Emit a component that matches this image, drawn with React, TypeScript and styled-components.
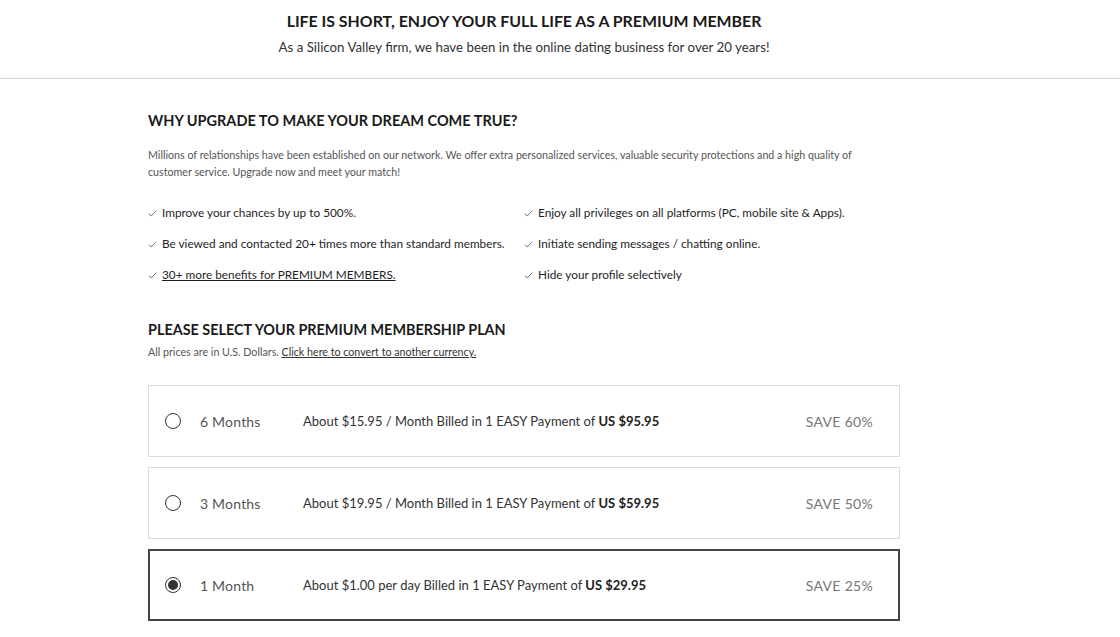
import React from 'react';
import styled, { createGlobalStyle } from 'styled-components';

const GlobalStyle = createGlobalStyle`
    html, body {
        margin: 0;
        padding: 0;
        background: #ffffff;
    }
    body {
        font-family: Lato, "Noto Sans", "Liberation Sans", sans-serif;
        color: #222;
    }
    * { box-sizing: border-box; }
`;

interface plan {
    id: string,
    label: string,
    about: string,
    price: string,
    save: string,
};

const plans: plan[] = [
    { id: '6m', label: '6 Months', about: 'About $15.95 / Month', price: 'US $95.95', save: 'SAVE 60%' },
    { id: '3m', label: '3 Months', about: 'About $19.95 / Month', price: 'US $59.95', save: 'SAVE 50%' },
    { id: '1m', label: '1 Month', about: 'About $1.00 per day', price: 'US $29.95', save: 'SAVE 25%' },
];

const leftBenefits = [
    'Improve your chances by up to 500%.',
    'Be viewed and contacted 20+ times more than standard members.',
];

const rightBenefits = [
    'Enjoy all privileges on all platforms (PC, mobile site & Apps).',
    'Initiate sending messages / chatting online.',
    'Hide your profile selectively',
];

const Header = styled.header`
    border-bottom: 1px solid #d6d6d6;
    padding: 11px 72px 22px 0;
    display: flex;
    flex-direction: column;
    align-items: center;
`;

const HeadTitle = styled.h1`
    margin: 0;
    font-size: 15.9px;
    font-weight: 700;
    line-height: 20px;
    color: #1a1a1a;
`;

const HeadSub = styled.p`
    margin: 8px 0 0;
    font-size: 13.3px;
    line-height: 17px;
    color: #333;
`;

const Main = styled.main`
    width: 752px;
    margin-left: 148px;
    padding-top: 33px;
`;

const SectionTitle = styled.h2<{ size?: string }>`
    margin: 0;
    font-size: ${(props) => props.size || '14.5px'};
    font-weight: 700;
    line-height: 18px;
    color: #1a1a1a;
`;

const Intro = styled.p`
    margin: 16px 0 0;
    font-size: 10.7px;
    line-height: 17px;
    color: #555;
    max-width: 720px;
`;

const Benefits = styled.div`
    display: grid;
    grid-template-columns: 376px 1fr;
    margin-top: 25px;
`;

const Column = styled.ul`
    list-style: none;
    margin: 0;
    padding: 0;
    display: flex;
    flex-direction: column;
    gap: 15px;
`;

const Benefit = styled.li`
    display: flex;
    align-items: center;
    gap: 5px;
    font-size: 11.8px;
    line-height: 16px;
    color: #1e1e1e;
    white-space: nowrap;
`;

const Check = styled.span`
    width: 9px;
    display: inline-flex;
`;

const BenefitLink = styled.a`
    color: #1e1e1e;
    text-decoration: underline;
`;

const PlanHeading = styled.div`
    margin-top: 38px;
`;

const Note = styled.p`
    margin: 6px 0 0;
    font-size: 10.7px;
    line-height: 13px;
    color: #555;
`;

const NoteLink = styled.a`
    color: #333;
    text-decoration: underline;
`;

const PlanList = styled.div`
    margin-top: 27px;
    display: flex;
    flex-direction: column;
    gap: 10px;
`;

const PlanCard = styled.label<{ selected?: boolean }>`
    height: 72px;
    display: flex;
    align-items: center;
    border: ${(props) => props.selected ? '2px solid #444' : '1px solid #dcdcdc'};
    padding: ${(props) => props.selected ? '0 25px 0 15px' : '0 26px 0 16px'};
    cursor: pointer;
`;

const Radio = styled.span<{ selected?: boolean }>`
    width: 16px;
    height: 16px;
    border-radius: 50%;
    border: 1.5px solid #333;
    display: inline-flex;
    align-items: center;
    justify-content: center;
    flex-shrink: 0;
    &::after {
        content: '';
        width: 10px;
        height: 10px;
        border-radius: 50%;
        background: #333;
        display: ${(props) => props.selected ? 'block' : 'none'};
    }
`;

const PlanName = styled.span`
    width: 103px;
    margin-left: 19px;
    font-size: 14px;
    color: #555;
    letter-spacing: 0.2px;
`;

const PlanDesc = styled.span`
    flex: 1;
    font-size: 13px;
    color: #333;
    b {
        font-weight: 700;
        color: #222;
    }
`;

const Save = styled.span`
    font-size: 14px;
    color: #777;
    letter-spacing: 0.3px;
`;

const CheckIcon = () => (
    <svg width="9" height="7" viewBox="0 0 9 7" fill="none">
        <path d="M0.8 3.8 L3.2 6 L8.2 0.8" stroke="#666" strokeWidth="0.9" />
    </svg>
);

const App = () => {
    const selected = '1m';
    return (
        <>
            <GlobalStyle />
            <Header>
                <HeadTitle>LIFE IS SHORT, ENJOY YOUR FULL LIFE AS A PREMIUM MEMBER</HeadTitle>
                <HeadSub>As a Silicon Valley firm, we have been in the online dating business for over 20 years!</HeadSub>
            </Header>
            <Main>
                <SectionTitle>WHY UPGRADE TO MAKE YOUR DREAM COME TRUE?</SectionTitle>
                <Intro>
                    Millions of relationships have been established on our network. We offer extra personalized services, valuable security protections and a high quality of customer service. Upgrade now and meet your match!
                </Intro>
                <Benefits>
                    <Column>
                        {leftBenefits.map(text => (
                            <Benefit key={text}><Check><CheckIcon /></Check>{text}</Benefit>
                        ))}
                        <Benefit>
                            <Check><CheckIcon /></Check>
                            <BenefitLink href="#">30+ more benefits for PREMIUM MEMBERS.</BenefitLink>
                        </Benefit>
                    </Column>
                    <Column>
                        {rightBenefits.map(text => (
                            <Benefit key={text}><Check><CheckIcon /></Check>{text}</Benefit>
                        ))}
                    </Column>
                </Benefits>
                <PlanHeading>
                    <SectionTitle size="14.4px">PLEASE SELECT YOUR PREMIUM MEMBERSHIP PLAN</SectionTitle>
                    <Note>All prices are in U.S. Dollars. <NoteLink href="#">Click here to convert to another currency.</NoteLink></Note>
                </PlanHeading>
                <PlanList>
                    {plans.map(p => (
                        <PlanCard key={p.id} selected={p.id === selected}>
                            <Radio selected={p.id === selected} />
                            <PlanName>{p.label}</PlanName>
                            <PlanDesc>{p.about} Billed in 1 EASY Payment of <b>{p.price}</b></PlanDesc>
                            <Save>{p.save}</Save>
                        </PlanCard>
                    ))}
                </PlanList>
            </Main>
        </>
    );
};

export default App;
